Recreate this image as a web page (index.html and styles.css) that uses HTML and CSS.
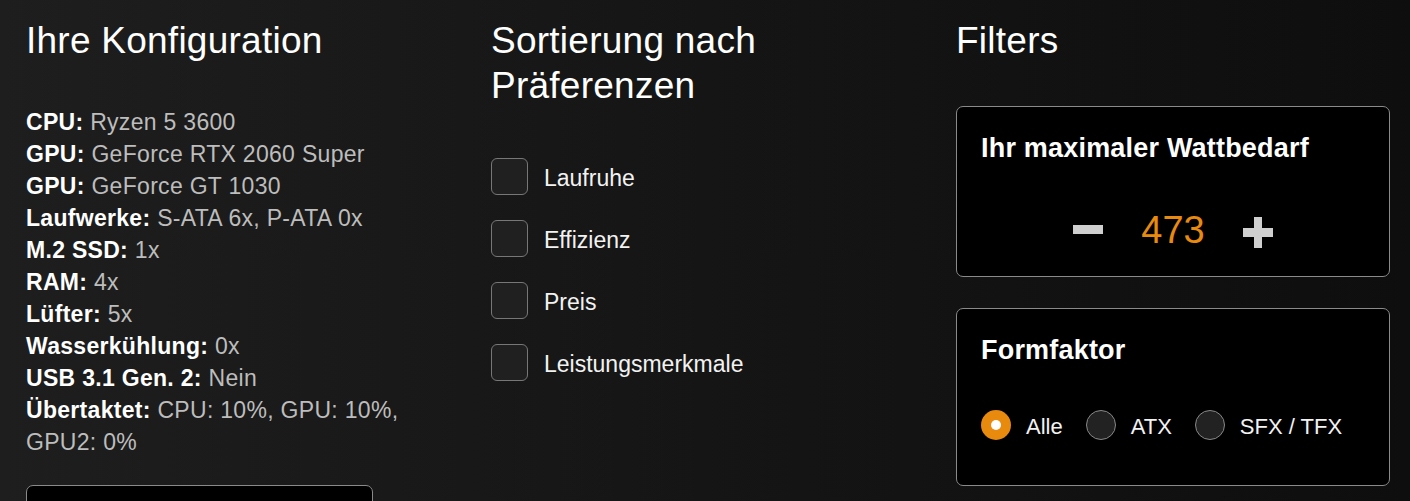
FILE: index.html
```html
<!DOCTYPE html>
<html lang="de">
<head>
<meta charset="utf-8">
<title>Konfiguration</title>
<link rel="stylesheet" href="styles.css">
</head>
<body>
<main class="page">
  <section class="col">
    <h1 class="heading">Ihre Konfiguration</h1>
    <ul class="config">
      <li><b>CPU:</b> <span>Ryzen 5 3600</span></li>
      <li><b>GPU:</b> <span>GeForce RTX 2060 Super</span></li>
      <li><b>GPU:</b> <span>GeForce GT 1030</span></li>
      <li><b>Laufwerke:</b> <span>S-ATA 6x, P-ATA 0x</span></li>
      <li><b>M.2 SSD:</b> <span>1x</span></li>
      <li><b>RAM:</b> <span>4x</span></li>
      <li><b>Lüfter:</b> <span>5x</span></li>
      <li><b>Wasserkühlung:</b> <span>0x</span></li>
      <li><b>USB 3.1 Gen. 2:</b> <span>Nein</span></li>
      <li><b>Übertaktet:</b> <span>CPU: 10%, GPU: 10%,<br>GPU2: 0%</span></li>
    </ul>
    <div class="action-box"></div>
  </section>

  <section class="col">
    <h1 class="heading">Sortierung nach Präferenzen</h1>
    <div class="checks">
      <label class="check"><span class="box"></span><span class="check-text">Laufruhe</span></label>
      <label class="check"><span class="box"></span><span class="check-text">Effizienz</span></label>
      <label class="check"><span class="box"></span><span class="check-text">Preis</span></label>
      <label class="check"><span class="box"></span><span class="check-text">Leistungsmerkmale</span></label>
    </div>
  </section>

  <section class="col">
    <h1 class="heading">Filters</h1>
    <div class="card card-watt">
      <h2 class="card-title">Ihr maximaler Wattbedarf</h2>
      <div class="stepper">
        <span class="minus" aria-label="weniger"></span>
        <span class="value">473</span>
        <span class="plus" aria-label="mehr"></span>
      </div>
    </div>
    <div class="card card-form">
      <h2 class="card-title">Formfaktor</h2>
      <div class="radios">
        <label class="radio"><span class="dot checked"></span><span class="radio-text">Alle</span></label>
        <label class="radio"><span class="dot"></span><span class="radio-text">ATX</span></label>
        <label class="radio"><span class="dot"></span><span class="radio-text">SFX / TFX</span></label>
      </div>
    </div>
  </section>
</main>
</body>
</html>
```

FILE: styles.css
```css
* { box-sizing: border-box; }

html, body {
  margin: 0;
  height: 100%;
}

body {
  background: linear-gradient(to right, #1e1e1e 0%, #151515 50%, #0e0e0e 100%);
  color: #fff;
  font-family: "Liberation Sans", Arial, sans-serif;
  overflow: hidden;
}

.page {
  display: grid;
  grid-template-columns: 434px 434px 434px;
  column-gap: 31px;
  padding: 18px 20px 0 26px;
}

.col {
  display: flex;
  flex-direction: column;
}

.heading {
  margin: 0;
  font-size: 37px;
  line-height: 45px;
  font-weight: normal;
  color: #fff;
  letter-spacing: 0.25px;
}

.config {
  list-style: none;
  margin: 43px 0 0 0;
  padding: 0;
  font-size: 23px;
  line-height: 32px;
  letter-spacing: 0.3px;
}

.config b {
  color: #fff;
  font-weight: bold;
}

.config span {
  color: #bdbdbd;
}

.action-box {
  margin-top: 27px;
  width: 347px;
  height: 60px;
  background: #000;
  border: 1px solid #8a8a8a;
  border-radius: 7px;
}

.checks {
  margin-top: 50px;
  display: flex;
  flex-direction: column;
  gap: 25px;
}

.check {
  display: flex;
  align-items: center;
  gap: 16px;
  font-size: 23px;
  color: #f2f2f2;
}

.check-text {
  padding-top: 4px;
}

.box {
  width: 37px;
  height: 37px;
  border: 1px solid #777;
  border-radius: 6px;
  background: #202020;
  flex: none;
}

.card {
  background: #000;
  border: 1px solid #8a8a8a;
  border-radius: 7px;
  padding: 25px 24px 22px 24px;
}

.card-watt {
  margin-top: 43px;
}

.card-form {
  margin-top: 31px;
  padding-bottom: 45px;
}

.card-title {
  margin: 0;
  font-size: 27px;
  line-height: 32px;
  font-weight: bold;
  color: #fff;
  letter-spacing: 0.2px;
}

.stepper {
  margin-top: 42px;
  height: 48px;
  display: flex;
  align-items: center;
  justify-content: center;
  gap: 38px;
}

.value {
  font-size: 38px;
  line-height: 48px;
  color: #e88a0e;
}

.minus,
.plus {
  position: relative;
  width: 30px;
  height: 30px;
  flex: none;
}

.minus::before,
.plus::before,
.plus::after {
  content: "";
  position: absolute;
  background: #cfcfcf;
}

.minus::before {
  left: 0;
  right: 0;
  top: 10px;
  height: 9px;
}

.plus::before {
  left: 0;
  right: 0;
  top: 13px;
  height: 9px;
}

.plus::after {
  top: 2px;
  bottom: -3px;
  left: 11px;
  width: 8px;
}

.radios {
  margin-top: 44px;
  display: flex;
  align-items: center;
  gap: 23px;
}

.radio {
  display: flex;
  align-items: center;
  gap: 15px;
  font-size: 22px;
  color: #f2f2f2;
  height: 30px;
}

.radio-text {
  padding-top: 4px;
}

.dot {
  width: 30px;
  height: 30px;
  border-radius: 50%;
  border: 1px solid #888;
  background: #222;
  flex: none;
  position: relative;
}

.dot.checked {
  border: none;
  background: #e88a0e;
}

.dot.checked::after {
  content: "";
  position: absolute;
  left: 10px;
  top: 10px;
  width: 10px;
  height: 10px;
  border-radius: 50%;
  background: #fff;
}
```
